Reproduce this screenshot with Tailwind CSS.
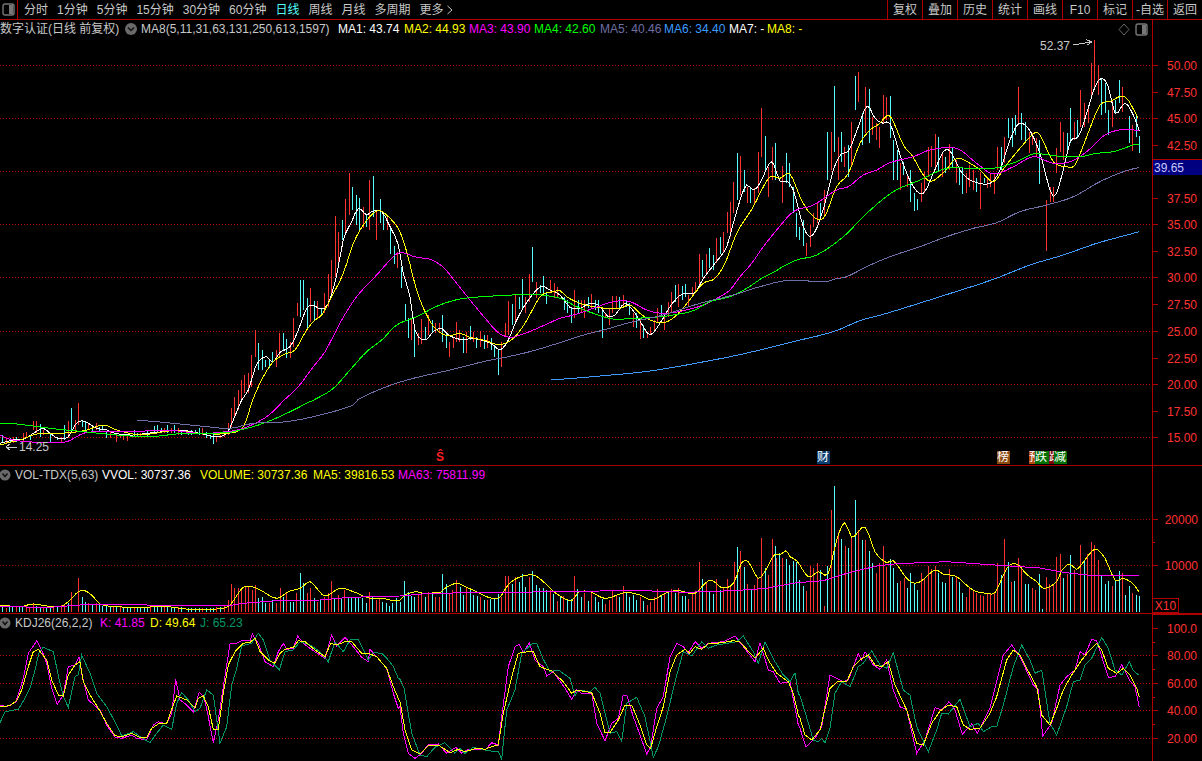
<!DOCTYPE html>
<html lang="zh-CN">
<head>
    <meta charset="UTF-8">
    <title>数字认证 日线</title>
    <script src="https://cdn.jsdelivr.net/npm/@tailwindcss/browser@4"></script>
</head>
<body class="bg-black overflow-hidden">
<div class="w-[1202px] h-[761px] flex flex-col bg-black text-xs leading-none text-[#c8c8c8] font-['Liberation_Sans','Noto_Sans_CJK_SC',sans-serif]">

    <!-- top bar -->
    <div class="h-[20px] shrink-0 flex border-b border-[#b00000]">
        <div class="w-[18px] flex items-center justify-center border-r border-[#b00000]">
            <svg width="13" height="13" viewBox="0 0 13 13"><rect x="1" y="1" width="11" height="11" rx="2" fill="none" stroke="#777" stroke-width="1.4"/><rect x="7" y="2" width="4" height="9" fill="#777"/></svg>
        </div>
        <div class="flex items-center gap-[9px] pl-[6px]">
            <span>分时</span><span>1分钟</span><span>5分钟</span><span>15分钟</span><span>30分钟</span><span>60分钟</span>
            <span class="text-[#54fcfc]">日线</span><span>周线</span><span>月线</span><span>多周期</span>
            <span class="flex items-center gap-[2px]">更多
                <svg width="8" height="10" viewBox="0 0 8 10"><path d="M1.5 1 L6 5 L1.5 9" fill="none" stroke="#c8c8c8"/></svg>
            </span>
        </div>
        <div class="ml-auto flex">
            <span class="w-[35px] flex items-center justify-center border-l border-[#b00000]">复权</span>
            <span class="w-[35px] flex items-center justify-center border-l border-[#b00000]">叠加</span>
            <span class="w-[35px] flex items-center justify-center border-l border-[#b00000]">历史</span>
            <span class="w-[35px] flex items-center justify-center border-l border-[#b00000]">统计</span>
            <span class="w-[35px] flex items-center justify-center border-l border-[#b00000]">画线</span>
            <span class="w-[35px] flex items-center justify-center border-l border-[#b00000]">F10</span>
            <span class="w-[35px] flex items-center justify-center border-l border-[#b00000]">标记</span>
            <span class="w-[35px] flex items-center justify-center border-l border-[#b00000]">-自选</span>
            <span class="w-[35px] flex items-center justify-center border-l border-[#b00000]">返回</span>
        </div>
    </div>

    <!-- price panel -->
    <div class="relative h-[446px] shrink-0 border-b border-[#a00000]">
        <svg id="price" class="absolute inset-0" width="1202" height="445" viewBox="0 20 1202 445" shape-rendering="crispEdges"></svg>
        <div class="relative h-[18px] flex items-center whitespace-nowrap">
            <span class="w-[125px]">数字认证(日线 前复权)</span>
            <svg class="w-[16px]" width="16" height="12" viewBox="0 0 16 12"><circle cx="6" cy="6" r="6" fill="#6a6a6a"/><path d="M3 4.5 L6 7.5 L9 4.5" fill="none" stroke="#111" stroke-width="1.5"/></svg>
            <span class="w-[197px]">MA8(5,11,31,63,131,250,613,1597)</span>
            <span class="w-[66px] text-white">MA1: 43.74</span>
            <span class="w-[65px] text-[#ffff00]">MA2: 44.93</span>
            <span class="w-[65px] text-[#ff00ff]">MA3: 43.90</span>
            <span class="w-[66px] text-[#00ff00]">MA4: 42.60</span>
            <span class="w-[64px] text-[#6f6fa5]">MA5: 40.46</span>
            <span class="w-[65px] text-[#3c9cff]">MA6: 34.40</span>
            <span class="w-[38px] text-white">MA7: -</span>
            <span class="text-[#ffff00]">MA8: -</span>
        </div>
        <svg class="absolute left-[1118px] top-[3px]" width="30" height="13" viewBox="0 0 30 13">
            <path d="M6 1 L11 6.500 L6 12 L1 6.500 Z" fill="none" stroke="#666"/>
            <rect x="18" y="1" width="11" height="11" rx="2" fill="none" stroke="#777" stroke-width="1.4"/><rect x="24" y="2" width="4" height="9" fill="#777"/>
        </svg>
        <div class="absolute left-[1153px] top-[139px] w-[49px] h-[16px] flex items-center pl-[1px] bg-[#000080] border-t border-[#b00000] text-[#c8c8ff]">39.65</div>
        <span class="absolute left-[1040px] top-[20px]">52.37</span>
        <span class="absolute left-[19px] top-[421px]">14.25</span>
        <!-- event markers -->
        <span class="absolute left-[436px] top-[431px] text-[#ff2020] font-bold">Ŝ</span>
        <span class="absolute left-[817px] top-[431px] w-[13px] h-[13px] bg-[#0b3c70] text-white overflow-hidden">财</span>
        <span class="absolute left-[997px] top-[431px] w-[13px] h-[13px] bg-[#8b4a10] text-white overflow-hidden">榜</span>
        <div class="absolute left-[1029px] top-[431px] h-[13px] flex">
            <span class="w-[6px] bg-[#b34a10] text-white overflow-hidden">预</span>
            <span class="w-[14px] bg-[#007000] text-white overflow-hidden">跌</span>
            <span class="w-[5px] bg-[#7a0000] text-white overflow-hidden">跌</span>
            <span class="w-[13px] bg-[#007000] text-white overflow-hidden">减</span>
        </div>
    </div>

    <!-- volume panel -->
    <div class="relative h-[148px] shrink-0 border-b border-[#b00000]">
        <svg id="vol" class="absolute inset-0" width="1202" height="147" viewBox="0 466 1202 147" shape-rendering="crispEdges"></svg>
        <div class="relative h-[18px] flex items-center whitespace-nowrap">
            <svg class="w-[15px]" width="15" height="12" viewBox="0 0 15 12"><circle cx="5" cy="6" r="5.500" fill="#6a6a6a"/><path d="M2.500 4.500 L5 7.500 L7.500 4.500" fill="none" stroke="#111" stroke-width="1.5"/></svg>
            <span class="w-[87px]">VOL-TDX(5,63)</span>
            <span class="w-[98px] text-white">VVOL: 30737.36</span>
            <span class="w-[113px] text-[#ffff00]">VOLUME: 30737.36</span>
            <span class="w-[85px] text-[#ffff00]">MA5: 39816.53</span>
            <span class="text-[#ff00ff]">MA63: 75811.99</span>
        </div>
        <div class="absolute left-[1152px] top-[132px] w-[27px] h-[15px] flex items-center justify-center border border-[#b00000] text-[#ff3232]">X10</div>
    </div>

    <!-- KDJ panel -->
    <div class="relative flex-1">
        <svg id="kdj" class="absolute inset-0" width="1202" height="147" viewBox="0 614 1202 147" shape-rendering="crispEdges"></svg>
        <div class="relative h-[18px] flex items-center whitespace-nowrap">
            <svg class="w-[15px]" width="15" height="12" viewBox="0 0 15 12"><circle cx="5" cy="6" r="5.500" fill="#6a6a6a"/><path d="M2.500 4.500 L5 7.500 L7.500 4.500" fill="none" stroke="#111" stroke-width="1.5"/></svg>
            <span class="w-[85px]">KDJ26(26,2,2)</span>
            <span class="w-[50px] text-[#ff00ff]">K: 41.85</span>
            <span class="w-[50px] text-[#ffff00]">D: 49.64</span>
            <span class="text-[#009966]">J: 65.23</span>
        </div>
    </div>
</div>

<script>
    const RED = '#ff3232', CYAN = '#54fcfc', AXIS = '#b00000', DOT = '#c80000';
    const SVGNS = 'http://www.w3.org/2000/svg';

    function el(svg, name, attrs, text) {
        const node = document.createElementNS(SVGNS, name);
        for (const k in attrs) node.setAttribute(k, attrs[k]);
        if (text) node.textContent = text;
        svg.appendChild(node);
        return node;
    }

    // the coordinates below were read off 3x crops, so each piece carries its crop origin
    function parse(ox, oy, str) {
        return str.trim().split(/\s+/).map(p => {
            const [x, y] = p.split(',').map(Number);
            return [ox + x / 3, oy + y / 3];
        });
    }

    function chain(pieces) {
        let out = [];
        pieces.forEach(([ox, oy, str]) => {
            const pts = parse(ox, oy, str);
            while (out.length && out[out.length - 1][0] >= pts[0][0]) out.pop();
            out = out.concat(pts);
        });
        return out;
    }

    // hermite resample at about one candle per step, moving averages are not angular
    function smooth(pts) {
        const out = [pts[0]];
        const slope = i => {
            const a = pts[Math.max(i - 1, 0)], b = pts[Math.min(i + 1, pts.length - 1)];
            return (b[1] - a[1]) / (b[0] - a[0]);
        };
        for (let i = 0; i < pts.length - 1; i++) {
            const [x0, y0] = pts[i], [x1, y1] = pts[i + 1];
            const dx = x1 - x0, n = Math.max(1, Math.ceil(dx / 3.5));
            const m0 = slope(i) * dx, m1 = slope(i + 1) * dx;
            for (let k = 1; k <= n; k++) {
                const t = k / n, t2 = t * t, t3 = t2 * t;
                const y = (2 * t3 - 3 * t2 + 1) * y0 + (t3 - 2 * t2 + t) * m0 + (3 * t2 - 2 * t3) * y1 + (t3 - t2) * m1;
                out.push([x0 + dx * t, y]);
            }
        }
        return out;
    }

    function line(svg, pieces, color, round) {
        const pts = round ? smooth(chain(pieces)) : chain(pieces);
        el(svg, 'polyline', {
            points: pts.map(p => p[0].toFixed(1) + ',' + p[1].toFixed(1)).join(' '),
            fill: 'none', stroke: color, 'stroke-width': 1
        });
    }

    function bar(svg, x, top, bottom, c) {
        const px = Math.floor(x) + 0.5;
        el(svg, 'line', { x1: px, x2: px, y1: top, y2: bottom, stroke: c === 'r' ? RED : CYAN, 'stroke-width': 1 });
    }

    function candles(svg, ox, oy, str) {
        str.trim().split(/\s+/).forEach(item => {
            const [x, t, b] = item.slice(1).split(',').map(Number);
            bar(svg, ox + x / 3, oy + t / 3, oy + b / 3, item[0]);
        });
    }

    function volumes(svg, ox, oy, str) {
        str.trim().split(/\s+/).forEach(item => {
            const [x, t] = item.slice(1).split(',').map(Number);
            bar(svg, ox + x / 3, oy + t / 3, 612, item[0]);
        });
    }

    function dotted(svg, y, color) {
        el(svg, 'line', { x1: 0, x2: 1152, y1: y + 0.5, y2: y + 0.5, stroke: color, 'stroke-dasharray': '1 2', 'stroke-width': 1 });
    }

    function tick(svg, y, len) {
        el(svg, 'line', { x1: 1152, x2: 1152 + len, y1: y + 0.5, y2: y + 0.5, stroke: AXIS, 'stroke-width': 1 });
    }

    function label(svg, y, text, x = 1197) {
        el(svg, 'text', { x, y: y + 5, fill: RED, 'font-size': 12, 'text-anchor': 'end', 'shape-rendering': 'auto' }, text);
    }

    function axisLine(svg, top, bottom) {
        el(svg, 'line', { x1: 1152.5, x2: 1152.5, y1: top, y2: bottom, stroke: AXIS, 'stroke-width': 1 });
    }

    /* ---------- price panel ---------- */
    const price = document.getElementById('price');
    [65, 118, 171, 224, 277, 331, 384, 437].forEach(y => dotted(price, y, DOT));
    axisLine(price, 20, 465);
    [['50.00',65],['47.50',92],['45.00',118],['42.50',145],['37.50',198],['35.00',224],['32.50',251],['30.00',277],
     ['27.50',304],['25.00',331],['22.50',358],['20.00',384],['17.50',411],['15.00',437]].forEach(([t, y]) => {
        tick(price, y, 6);
        label(price, y, t);
    });

    candles(price, 0, 380, `c8,165,190 r18,175,190 c30,175,190 r40,170,188 c50,172,186 r70,158,185 r80,155,175 c90,165,180
        r100,122,150 r110,122,160 c120,132,170 r130,150,165 c150,160,185 c172,170,180 r185,170,190 c194,135,180 r205,122,175
        c215,85,150 r226,120,155 r236,70,135 c246,120,140 c256,125,150 r266,130,150 c277,135,155 r288,130,150 c298,140,155
        c308,135,150 c319,155,175 r330,155,175 r350,160,185 r360,165,175 r370,165,180 r382,165,183 c402,150,170 c412,160,172
        r422,160,170 c442,150,170 c462,138,160 c472,135,155 c483,145,158 r493,143,160 c503,135,160 r514,145,158 c524,135,160
        r534,145,165 c544,150,165 c565,155,165 c575,150,165 c587,150,162 c597,145,165 r607,145,165 c618,155,175 c630,165,178
        c640,160,192 r650,170,185 r660,165,175 r672,160,172 r685,130,165 r693,85,140`);
    candles(price, 200, 160, `r103,712,770 r114,690,750 r124,660,720 r133,645,700 r144,640,700 r155,585,680 r166,510,590 c176,550,630 c187,570,630
        c197,600,620 c207,600,625 c217,575,610 r228,570,620 r238,520,590 c249,520,570 c259,538,595 r270,545,593 r280,475,560
        r292,430,467 c301,360,470 c311,360,450 c322,415,505 r332,385,485 c342,423,480 r352,423,475 c363,445,465 r374,400,460
        r385,343,440 r394,300,410 r406,168,350 r416,215,305 c427,180,240 r437,117,215 r448,38,165 c458,82,150 c468,105,195
        c478,115,210 r489,140,205 c499,165,200 r508,60,210 c520,48,170 r530,150,240 c541,118,190 c551,160,210 r561,170,210
        c572,205,282 c583,258,312 r592,275,323 c604,322,385 c615,433,480 c625,475,535 r634,475,540 c644,500,590 r655,520,555
        r665,478,553 c676,500,540 r686,465,525 c697,480,520 r707,490,520 r717,490,520 c727,465,545 c738,520,565 r748,545,590
        r759,530,565 r769,487,547 r779,510,545 c789,530,580 r799,515,580 c810,497,540 r820,515,545 c830,530,565 r841,513,560
        c852,525,567 r862,525,565 c873,535,570 c884,555,590 c895,570,645 r904,545,622 r915,490,530 r925,423,525 c937,432,495
        r947,405,490 c957,410,448 c967,357,445 r977,410,460 r988,343,425 c997,262,365 r1009,365,415 c1020,375,400 c1030,347,400
        c1040,395,432 r1051,360,395 r1062,370,415 r1072,380,410`);
    candles(price, 560, 100, `c13,590,630 c23,600,640 c34,625,668 r43,570,655 c54,600,640 r63,600,640 r73,600,655 c85,590,625 r94,582,625
        c105,600,630 c115,600,640 c127,625,713 r137,640,655 r147,625,675 r157,588,640 r168,588,625 c178,592,630 r189,585,625
        c199,600,620 c208,610,645 r219,640,680 c229,640,683 r241,660,718 c251,675,714 r262,695,715 r272,680,705 r282,660,690
        r292,625,670 c304,615,650 r313,640,690 r324,605,650 r334,575,640 c346,555,605 r355,552,620 c366,558,600 c376,552,590
        r386,585,622 r396,560,585 r407,547,580 r417,462,555 c427,480,530 r438,462,525 c448,445,505 c459,465,510 r469,415,490
        c480,410,462 r490,395,455 r501,335,400 r511,305,410 r521,245,340 c532,160,300 r541,168,285 c553,210,275 r562,260,310
        c572,265,310 r583,265,310 r595,155,280 r604,25,170 c615,108,210 r626,200,290 r637,140,240 c647,128,240`);
    candles(price, 780, 20, `r7,437,550 c18,400,490 c28,430,500 c40,500,580 c49,580,650 c58,620,660 c70,600,678 r80,668,708 r91,615,680 r101,580,620
        r111,550,610 c122,550,595 r133,510,590 c143,335,480 r154,335,450 c163,198,395 r175,350,480 c184,335,425 r194,380,440
        c204,375,470 r214,305,440 c226,168,270 r236,156,245 c246,280,375 r256,200,340 c268,208,370 r278,290,345 r289,310,360
        r299,320,385 r310,225,310 r320,232,300 c330,228,355 c340,360,480 c351,390,480 r362,430,510 c371,425,465 r381,465,500
        c392,450,545 c403,520,572 c412,537,570 r424,490,545 r434,455,520 r445,380,470 r454,378,440 r465,342,450 c475,350,455
        r486,400,470 c497,410,460 r508,372,450 c518,385,445 r528,420,490 c537,440,495 c548,445,522 r558,460,518 r569,435,500
        r580,450,510 c590,475,515 r602,455,567 c612,475,490 r622,470,503 r632,460,500 r643,460,522 r652,380,450 c664,380,450
        r674,350,430 c685,293,355 c696,295,380 c706,285,345 r715,200,310 c724,280,360 c737,305,370 r747,335,400 r758,340,375
        r768,355,410 c779,360,492 r800,540,692 r810,500,545 r820,500,545 r830,385,460 r841,305,395 r850,335,420 c861,340,400
        c872,265,370 r883,305,360 c893,300,350 r902,210,320 r914,250,320 r925,265,310 r934,130,230 r943,60,200 r955,135,225
        c965,175,285 c976,190,280 c985,270,345 r996,240,320 c1007,240,280 c1018,180,250 r1028,200,275 c1049,288,370 r1058,315,393
        c1069,285,352 c1079,348,398`);

    line(price, [
        [0, 380, '0,190 20,185 40,180 70,178 100,160 130,145 150,160 175,175 205,170 225,135 245,122 265,130 290,145 320,150 345,160 400,165 440,160 490,155 540,150 600,160 650,170 680,160 700,120 730,60'],
        [200, 160, '125,720 145,690 165,625 180,600 200,590 218,607 240,577 270,560 295,510 320,445 335,435 365,447 385,430 410,345 430,240 455,185 475,145 500,165 515,155 545,155 575,210 595,255 610,340 630,410 645,510 675,540 700,515 725,505 745,525 790,540 815,535 860,545 880,555 900,570 925,540 950,480 985,420 1025,378 1045,388 1080,388'],
        [560, 100, '0,585 30,622 60,625 85,612 115,615 145,650 165,645 195,610 225,640 250,680 270,705 300,670 330,620 365,583 405,578 430,535 465,490 500,440 520,370 545,285 560,255 580,270 600,250 635,185 660,245 680,240'],
        [780, 20, '0,483 20,483 40,510 70,620 90,650 110,625 135,550 160,450 185,400 205,395 235,320 262,258 285,295 310,310 330,310 365,420 400,500 430,520 460,460 490,395 510,392 540,450 570,480 630,490 660,450 690,360 715,312 745,325 780,400 820,530 850,450 870,365 895,350 920,280 945,200 965,175 985,200 1005,280 1035,250 1060,285 1078,333']
    ], '#ffffff', true);
    line(price, [
        [0, 380, '0,195 30,187 60,180 110,162 160,160 210,158 260,150 310,135 350,150 400,162 450,162 520,152 600,160 680,160 730,140'],
        [200, 160, '160,715 190,650 220,605 260,580 285,570 320,510 345,480 365,465 400,400 430,340 460,250 490,195 520,160 540,152 575,180 600,215 620,275 650,390 680,465 710,510 745,527 780,520 810,532 850,540 880,550 900,555 940,535 975,490 1005,435 1025,405 1060,395 1080,392'],
        [560, 100, '0,572 20,590 60,610 100,620 140,625 180,625 210,615 240,640 270,660 310,668 345,650 385,605 430,550 465,535 495,490 530,400 580,320 600,280 630,230 660,232'],
        [780, 20, '0,475 30,462 60,530 90,580 130,595 170,500 205,460 240,370 270,330 300,310 320,287 335,295 370,375 395,405 445,482 490,458 530,415 570,430 600,450 640,485 675,440 720,385 765,338 780,345 820,425 860,440 885,435 920,350 960,255 990,245 1035,230 1075,295']
    ], '#ffff00', true);
    line(price, [
        [0, 380, '0,165 30,178 80,185 140,187 200,185 250,160 300,155 400,155 500,150 600,160 680,155 730,145 800,110 870,45 905,0'],
        [200, 160, '255,718 295,680 340,620 375,575 425,480 470,410 530,345 575,295 600,278 650,292 690,298 730,322 770,370 810,420 860,480 895,518 930,532 960,525 1000,510 1050,488 1080,475'],
        [560, 100, '0,655 40,645 100,625 160,605 210,605 260,630 310,640 370,632 430,615 480,590 510,570 540,530 575,490 610,440 660,375'],
        [780, 20, '0,618 40,575 100,555 170,510 205,500 250,465 290,450 330,428 400,410 450,390 530,385 590,430 640,462 700,440 760,410 820,430 870,425 920,395 975,345 1030,328 1078,332']
    ], '#ff00ff', true);
    line(price, [
        [0, 380, '0,130 50,132 150,145 250,155 350,165 450,170 550,160 680,158 740,145 790,130 860,100 920,70 980,35 1025,0'],
        [200, 160, '345,718 400,685 450,630 500,575 545,540 590,495 650,470 715,437 780,417 850,410 920,406 1000,403 1080,408'],
        [560, 100, '0,595 50,620 100,640 160,657 220,655 280,652 340,645 400,632 450,605 510,590 560,565 610,532 650,512'],
        [780, 20, '0,745 50,720 110,705 190,650 260,580 340,515 420,480 500,445 570,445 640,445 710,425 760,402 830,408 900,410 950,400 1000,395 1060,375 1078,372']
    ], '#00ff00', true);
    line(price, [
        [0, 380, '410,120 500,128 620,140 690,145 760,130 860,125 960,105 1060,75 1200,10'],
        [200, 160, '475,718 560,680 640,655 750,630 850,605 970,580 1080,548'],
        [560, 100, '0,728 60,708 130,690 220,665 310,645 420,610 520,585 600,560 680,542 800,545'],
        [780, 20, '160,778 200,770 260,740 330,710 420,680 500,650 580,625 650,608 720,575 800,555 880,530 960,485 1030,455 1078,442']
    ], '#6f6fa5', true);
    line(price, [
        [200, 160, '1053,660 1080,658'],
        [560, 100, '0,838 120,828 270,813 486,775 600,750 700,725 820,695 900,662'],
        [780, 20, '320,880 480,830 640,778 750,735 850,705 950,670 1078,635']
    ], '#3c9cff', true);

    // high and low arrows
    el(price, 'path', { d: 'M1073 45 L1091 42 M1086 39.500 L1092 42 L1087 45', fill: 'none', stroke: '#c8c8c8', 'stroke-width': 1 });
    el(price, 'path', { d: 'M6 447 L17 447 M10 444 L6 447 L10 450', fill: 'none', stroke: '#c8c8c8', 'stroke-width': 1 });

    /* ---------- volume panel ---------- */
    const vol = document.getElementById('vol');
    [519, 565].forEach(y => dotted(vol, y, '#a00000'));
    axisLine(vol, 466, 613);
    tick(vol, 519, 6); tick(vol, 542, 3); tick(vol, 565, 6);
    label(vol, 519, '20000', 1198);
    label(vol, 565, '10000', 1198);

    volumes(vol, 0, 380, `c8,680 r18,683 c28,680 c38,682 r48,680 c58,678 c68,680 r78,678 r88,680 r100,668 c110,678 c120,680 r130,682 c140,682 c150,680
        r160,682 c172,680 r185,675 r194,672 c205,670 r215,636 r236,595 c246,650 c256,665 r266,670 c277,672 r288,668 c298,672 c308,678 c319,678 c330,680
        r340,678 c350,680 r360,682 c370,680 c382,680 c392,682 r402,682 c412,680 c422,682 c432,682 c442,680 r452,680 c462,675 c472,678 c483,678 r493,680
        c503,678 c514,682 c524,680 r534,682 c544,682 c565,685 c575,685 c587,685 c597,685 r607,685 c618,685 c630,685 c640,685 r650,682 c660,682 r672,678
        r685,660 r693,612 r704,625 r715,625 r725,630 r735,622 r746,620 r756,630 r766,615 c776,655 c786,650 c797,668 r808,668 c818,660 r830,668 r840,625
        c850,650 r860,635 c870,665 c880,665 r890,640 c900,578 c911,610 r921,640 r931,625 c942,655 r952,665 c962,660 r972,650 r984,640 r994,602 c1004,655
        r1014,645 c1024,655 r1034,630 c1044,650 c1054,650 c1065,650 c1075,650 c1087,655 c1098,668 r1108,635 c1118,650 r1128,660 r1138,655 c1148,665 c1158,668
        c1168,678 c1178,668 c1190,655`);
    volumes(vol, 400, 440, `c2,485 c13,423 c24,455 c33,468 c43,470 r54,465 r65,460 c75,470 r86,455 c96,458 r107,470 r117,470 c127,402 c138,432 r148,458 r158,450
        r169,420 c180,440 c190,465 r200,440 c211,450 c221,465 c231,468 r241,470 c253,480 r262,480 c272,478 c283,475 c295,462 r305,470 r316,408 r325,408 c336,432
        r346,410 c357,425 c367,403 c377,440 r387,412 c397,393 c408,435 c418,445 c429,445 c439,450 r450,450 c460,462 r471,483 c481,470 r491,468 c503,480 c513,477
        r523,408 c533,447 c544,472 r553,460 c564,483 r574,460 c586,472 c595,485 c606,478 r616,492 r627,480 r637,452 r648,465 c658,472 r670,437 c679,458 c689,472
        c699,465 c710,480 r720,470 c730,482 r741,495 r752,485 r762,470 r772,447 c783,465 r793,460 c804,458 r814,448 c826,458 r835,443 c847,468 c856,468 r866,478
        r877,455 r887,460 r898,366 c908,416 r918,428 c928,452 c939,462 r949,417 c961,450 r971,440 r981,417 r992,440 r1003,366 c1012,321 r1022,333 c1033,380 r1043,432
        c1053,448 r1063,435 r1073,415 r1083,293 c1095,385 r1105,405 r1117,297 c1127,318 c1138,340`);
    volumes(vol, 780, 440, `r-12,355 c-2,357 r6,353 c18,357 c28,375 c40,362 c49,365 c58,420 c70,437 r80,452 r91,377 r100,385 r111,368 c122,390 r133,497 c143,378 r154,210 c163,138
        r175,277 c184,297 r196,318 c205,323 r214,295 c226,180 r236,270 c247,300 r256,300 c268,333 c278,370 r289,398 r298,370 r310,318 r320,380 c331,358 c340,383 c352,428
        r362,423 r374,413 c382,445 c391,398 c403,428 c412,450 r424,398 r434,413 r445,378 r454,388 r465,377 c475,398 c487,425 c496,430 r508,388 c518,410 r528,410 c538,425
        c548,460 r558,470 r569,440 r580,450 r590,460 r601,465 r611,468 r622,460 r632,460 r643,458 r652,370 c664,405 r673,297 c685,367 r695,425 c703,422 r715,353 r724,385
        c737,432 c745,432 r756,445 r767,450 c778,402 c787,507 r799,410 r809,432 r820,435 r830,350 r841,342 c851,413 r862,403 c872,345 r882,390 r901,315 c913,362 r923,342
        r934,306 r943,315 r955,360 c965,405 c976,432 c985,423 r996,437 c1007,420 c1018,392 r1028,400 c1037,465 c1049,438 r1058,458 c1069,465 c1079,468`);

    line(vol, [
        [0, 380, '0,675 30,678 60,680 100,672 140,678 185,678 210,660 235,635 255,632 280,650 300,672 350,680 420,682 500,680 570,688 660,686 690,675 730,622 770,625 830,655 865,635 900,625 930,605 950,625 975,648 1020,625 1060,635 1110,655 1150,655 1170,660 1200,660'],
        [400, 440, '0,480 15,465 50,455 75,462 100,458 120,458 135,445 170,430 195,440 230,455 265,472 300,472 320,440 350,415 400,405 430,425 465,458 515,482 535,457 570,455 615,475 675,458 720,465 755,480 800,458 835,452 885,460 915,430 935,420 965,443 1000,430 1025,368 1045,365 1075,415 1100,385 1125,342 1155,335 1200,375'],
        [780, 440, '0,345 18,332 30,350 50,362 85,410 115,395 145,400 170,300 195,248 215,292 255,262 285,335 320,368 340,362 385,420 415,428 465,390 490,402 530,410 565,440 590,455 625,460 645,458 680,385 695,372 715,375 740,403 770,425 790,445 830,425 845,392 870,372 890,388 915,360 945,327 975,355 1005,420 1030,415 1060,432 1076,455']
    ], '#ffff00', true);
    line(vol, [
        [0, 380, '0,680 150,682 200,678 270,673 350,674 640,677 680,678 730,670 830,662 960,660 1050,652 1200,650'],
        [400, 440, '0,468 90,460 400,456 600,453 730,452 860,457 1000,452 1100,445 1200,428'],
        [780, 440, '0,437 50,428 130,422 200,400 290,378 350,371 500,365 600,372 780,384 850,397 920,405 1076,408']
    ], '#ff00ff');

    /* ---------- KDJ panel ---------- */
    const kdj = document.getElementById('kdj');
    [655, 683, 710, 738].forEach(y => dotted(kdj, y, DOT));
    axisLine(kdj, 614, 761);
    el(kdj, 'line', { x1: 1152, x2: 1202, y1: 614.5, y2: 614.5, stroke: AXIS, 'stroke-width': 1 });
    [['100.0',628],['80.00',655],['60.00',683],['40.00',710],['20.00',738]].forEach(([t, y]) => {
        tick(kdj, y, 6);
        label(kdj, y, t);
    });
    [642, 669, 697, 724].forEach(y => tick(kdj, y, 3));

    line(kdj, [
        [0, 610, '0,285 20,290 48,275 70,205 85,130 95,115 110,93 125,120 140,160 155,235 172,283 190,255 205,170 225,165 237,140 245,190 265,270 300,300 320,345 345,382 365,385 395,375 410,385 440,390 460,345 475,335 500,342 515,310 527,208 540,270 560,285 580,305 598,247 612,262 625,320 640,398 655,330 670,230 690,102 710,100 725,92 750,92 757,72 775,100 795,155 820,170 835,125 850,100 860,118 880,115 893,78 910,100 940,122 975,145 995,75 1010,108 1035,82 1060,110 1085,142 1105,155 1110,118 1130,140 1160,175 1180,250 1195,295'],
        [400, 610, '0,290 10,370 25,430 45,445 65,430 85,403 115,402 140,430 168,412 185,430 205,418 255,420 275,398 295,405 305,320 325,170 345,110 358,103 370,128 388,98 405,150 430,170 440,198 460,185 495,235 515,268 530,240 545,250 575,250 590,340 615,392 635,340 655,325 670,255 680,255 700,320 720,375 740,432 752,410 770,295 790,260 810,140 830,100 850,110 865,130 885,95 905,115 925,100 970,95 1005,78 1030,110 1065,155 1080,98 1105,180 1120,185 1140,220 1170,215 1195,345'],
        [800, 610, '0,355 18,412 45,385 65,350 90,195 110,205 130,215 145,210 175,130 185,150 195,125 220,165 240,178 260,150 280,240 300,290 320,300 350,430 375,390 405,293 425,300 447,275 465,300 487,373 515,342 532,370 570,295 590,215 610,135 635,105 660,140 700,225 715,240 728,378 755,340 780,225 800,200 825,180 840,125 855,135 875,88 890,92 925,202 945,200 965,165 990,212 1005,230 1018,292']
    ], '#ff00ff');
    line(kdj, [
        [0, 610, '0,338 15,305 55,298 75,265 90,235 105,180 118,125 130,112 160,125 180,220 190,258 205,292 225,200 235,195 245,135 270,190 290,250 320,290 350,345 365,378 400,365 420,380 450,398 470,370 490,345 515,358 530,280 545,248 565,270 585,305 600,295 620,240 640,255 660,400 680,350 695,225 710,175 725,108 755,100 775,70 790,90 810,150 838,180 855,125 880,120 900,95 930,105 960,125 985,155 1005,95 1030,125 1050,90 1075,88 1105,150 1120,128 1145,130 1165,150 1180,170 1195,205'],
        [400, 610, '0,208 12,235 35,370 60,435 80,440 105,412 135,398 165,430 180,415 195,430 220,412 265,422 295,425 305,447 320,300 345,240 365,130 395,102 410,100 430,148 450,185 475,180 510,205 525,258 535,240 570,245 585,232 600,250 630,370 650,365 665,395 680,280 710,262 735,320 760,442 775,410 800,320 825,215 850,125 875,138 905,95 925,115 950,105 1010,95 1030,78 1060,125 1075,160 1095,95 1125,155 1150,195 1170,215 1185,188 1195,250'],
        [800, 610, '0,258 15,305 40,390 55,395 65,385 75,398 90,355 105,250 125,215 150,230 175,170 190,160 215,122 240,165 260,175 280,128 310,240 330,255 350,350 385,425 410,360 425,310 445,312 480,268 510,350 535,340 550,365 575,350 590,350 610,285 640,170 665,105 690,150 705,190 725,180 750,340 770,375 800,290 820,215 840,210 855,165 875,145 905,82 925,115 945,180 965,195 988,155 1000,182 1016,195']
    ], '#009966');
    line(kdj, [
        [0, 610, '0,290 30,287 50,272 65,240 85,170 100,125 115,118 140,150 155,210 175,255 190,258 205,195 225,165 240,155 250,215 270,255 295,295 320,340 345,377 365,380 395,370 420,382 440,382 455,355 475,342 500,340 520,285 530,258 560,270 585,295 595,265 610,258 625,290 640,358 655,358 670,250 685,165 705,125 730,100 750,97 765,85 780,125 805,150 825,160 840,130 855,118 880,112 895,92 915,95 945,120 975,140 992,100 1010,105 1035,95 1055,95 1085,130 1105,130 1130,140 1160,175 1180,230 1195,265'],
        [400, 610, '0,275 15,360 35,420 60,432 85,408 115,405 150,428 175,418 195,425 230,415 255,418 275,410 295,405 310,310 335,200 355,130 385,125 400,125 420,170 455,183 490,215 515,250 530,240 575,248 600,310 615,368 630,368 655,330 675,285 695,285 720,345 740,405 752,415 770,350 790,290 810,185 830,135 855,118 870,130 885,110 905,118 925,102 965,98 1000,92 1020,95 1050,130 1065,145 1090,115 1105,150 1130,190 1165,215 1180,250 1195,315'],
        [800, 610, '0,325 15,375 35,390 60,360 90,235 115,213 140,215 160,170 180,150 205,135 225,165 245,170 265,155 285,225 320,300 350,400 370,405 395,340 420,303 445,285 470,290 490,345 510,358 540,355 570,310 590,260 620,150 640,120 660,135 680,175 710,230 725,315 750,345 770,295 790,240 815,195 845,150 865,125 890,100 905,120 925,175 950,190 970,175 990,195 1010,235 1018,262']
    ], '#ffff00');
</script>
</body>
</html>
